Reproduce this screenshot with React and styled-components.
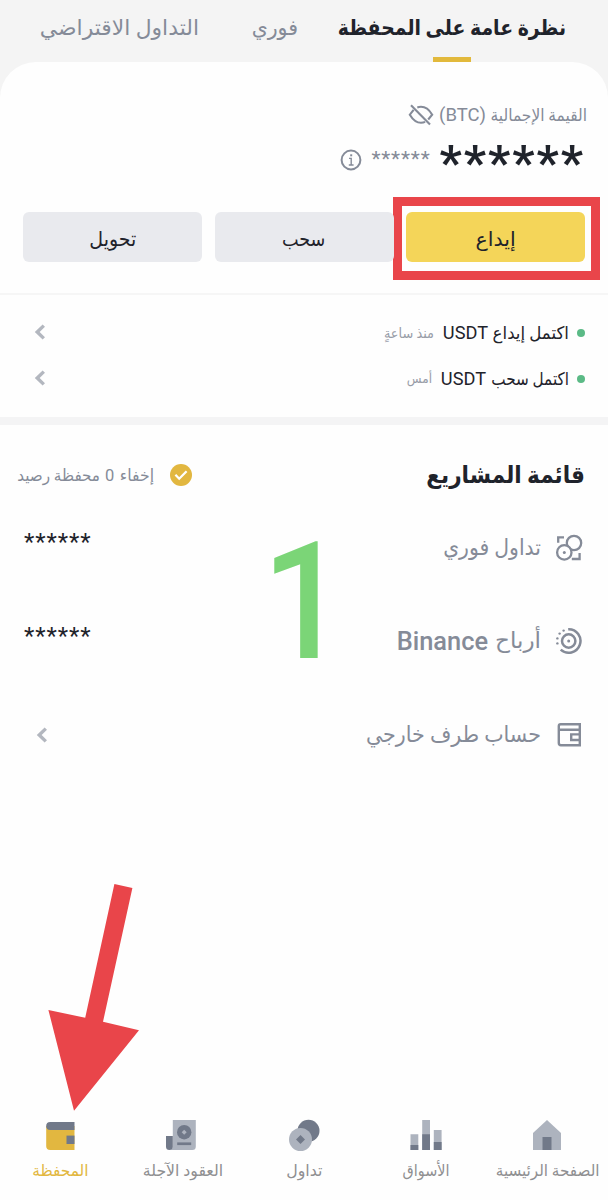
import React from 'react';
import styled, { createGlobalStyle, css } from 'styled-components';

const GlobalStyle = createGlobalStyle`
  * {
    box-sizing: border-box;
  }

  body {
    margin: 0;
    background: #f4f4f4;
    font-family: Roboto, "DejaVu Sans", sans-serif;
    color: #1f232b;
  }
`;

const activities = [
  { text: 'اكتمل إيداع', width: 77, scale: 0.95, time: 'منذ ساعةٍ', timeWidth: 50, timeSize: 14, timeScale: 0.92 },
  { text: 'اكتمل سحب', width: 79, scale: 0.87, time: 'أمس', timeWidth: 25, timeSize: 13, timeScale: 0.93 },
];

const tabs = [
  { id: 'home', label: 'الصفحة الرئيسية', scale: 0.95, Icon: HomeIcon },
  { id: 'markets', label: 'الأسواق', scale: 0.9, Icon: MarketsIcon },
  { id: 'trade', label: 'تداول', scale: 0.99, Icon: TradeIcon },
  { id: 'futures', label: 'العقود الآجلة', scale: 0.98, Icon: FuturesIcon },
  { id: 'wallet', label: 'المحفظة', scale: 0.96, Icon: WalletIcon, active: true },
];

function EyeOffIcon() {
  return (
    <svg width="26" height="22" viewBox="0 0 26 22" fill="none" stroke="#858b98" strokeWidth="2.1">
      <path d="M3 1.200 22 20.400" />
      <path d="M5.600 5.800 1.800 10.700c3 4.900 6.600 8.100 11.200 8.100 1.500 0 2.900-.3 4.100-.9" />
      <path d="M9.300 3.400c1.100-.4 2.400-.6 3.700-.6 4.700 0 8.300 3 11.200 7.900l-4 4.800" />
    </svg>
  );
}

function InfoIcon() {
  return (
    <svg width="22" height="22" viewBox="0 0 22 22" fill="none" stroke="#858b98" strokeWidth="2">
      <circle cx="11" cy="11" r="9.400" />
      <path d="M9 9.400h2.200v6.800M8.800 16h4.800" strokeWidth="1.400" />
      <path d="M10.200 6.300h2" />
    </svg>
  );
}

function Chevron() {
  return (
    <svg width="12" height="16" viewBox="0 0 12 16" fill="none" stroke="#b3b7bf" strokeWidth="3.400">
      <path d="M9.800 1.600 3.200 8l6.600 6.400" />
    </svg>
  );
}

function CheckIcon() {
  return (
    <svg width="22" height="22" viewBox="0 0 22 22">
      <circle cx="11" cy="11" r="11" fill="#e2b740" />
      <path d="m5.400 10.800 3.800 3.900 7.400-7.500" fill="none" stroke="#fff" strokeWidth="2.300" />
    </svg>
  );
}

function SpotIcon() {
  return (
    <svg width="28" height="28" viewBox="0 0 28 28" fill="none" stroke="#858b98" strokeWidth="2.300">
      <path d="M3.200 8.800V3.400H9M16.800 25H24.600v-6" />
      <circle cx="19" cy="9" r="7.200" />
      <circle cx="9.300" cy="18.400" r="7.200" fill="#fff" />
      <circle cx="9.300" cy="18.400" r="1.500" fill="#858b98" stroke="none" />
    </svg>
  );
}

function EarnIcon() {
  return (
    <svg width="28" height="28" viewBox="0 0 28 28" fill="none" stroke="#858b98" strokeWidth="2.500">
      <circle cx="13.700" cy="14" r="6.700" />
      <circle cx="13.700" cy="14" r="1.500" fill="#858b98" stroke="none" />
      <path d="M13.200 2.200A11.800 11.800 0 1 1 5.700 22.700" />
      <g fill="#858b98" stroke="none">
        <circle cx="8.600" cy="3.600" r="1.200" />
        <circle cx="4.600" cy="6.600" r="1.200" />
        <circle cx="2.400" cy="11.400" r="1.200" />
        <circle cx="2.400" cy="16.400" r="1.200" />
      </g>
    </svg>
  );
}

function AccountIcon() {
  return (
    <svg width="28" height="28" viewBox="0 0 28 28" fill="none" stroke="#858b98" strokeWidth="2.400">
      <path d="M24.800 3.200H5.600Q3.800 3.200 3.800 5v17q0 2.200 2.200 2.200h18.800z" />
      <path d="M4 8.800h20.800M24.800 13.400h-8.600v5.600h8.600" />
    </svg>
  );
}

function HomeIcon() {
  return (
    <svg width="32" height="32" viewBox="0 0 32 32">
      <path d="M2 14 16 1l14 13v17H2z" fill="#adb3be" />
      <path d="M11.500 18h9v13h-9z" fill="#717989" />
    </svg>
  );
}

function MarketsIcon() {
  return (
    <svg width="32" height="32" viewBox="0 0 32 32">
      <path d="M0.500 15.300h7.800V31H.5zM12.200 1H20v30h-7.800zM23.800 11h7.800v20h-7.800z" fill="#adb3be" />
      <path d="M0.500 26h7.800v5H.5zM12.200 15.300H20V31h-7.800zM23.800 23h7.800v8h-7.800z" fill="#717989" />
    </svg>
  );
}

function TradeIcon() {
  return (
    <svg width="32" height="32" viewBox="0 0 32 32">
      <circle cx="20.500" cy="11.800" r="11" fill="#717989" />
      <circle cx="12.500" cy="20.500" r="11.500" fill="#adb3be" />
      <path d="m12.500 16 4.500 4.500-4.500 4.500L8 20.500z" fill="#717989" />
    </svg>
  );
}

function FuturesIcon() {
  return (
    <svg width="32" height="32" viewBox="0 0 32 32">
      <path d="M6.800 1h23v26.500q0 3.500-3.500 3.500h-23q3.500 0 3.500-4z" fill="#adb3be" />
      <path d="M0 17h6.800v10.500Q6.800 31 3.400 31T0 27.500z" fill="#717989" />
      <circle cx="18.200" cy="13.200" r="7.200" fill="#717989" />
      <path d="m18.200 10.700 2.500 2.500-2.500 2.500-2.500-2.500z" fill="#adb3be" />
      <path d="M11.200 23.400h14v2.700h-14z" fill="#717989" />
    </svg>
  );
}

function WalletIcon() {
  return (
    <svg width="32" height="32" viewBox="0 0 32 32">
      <path d="M1.200 7h28.300v24H5.200q-4 0-4-4z" fill="#e2b740" />
      <path d="M5.200 3h24.300v8H5.200q-4 0-4-4t4-4z" fill="#717989" />
      <path d="M21.500 16.600h8v8.400h-8z" fill="#717989" />
    </svg>
  );
}

export default function App() {
  return (
    <Screen dir="rtl">
      <GlobalStyle />
      <Header>
        <HeaderTab $active $gap={40}>
          <Words $w={228} $scale={0.873}>نظرة عامة على المحفظة</Words>
        </HeaderTab>
        <HeaderTab $gap={53}>
          <Words $w={46} $scale={0.95}>فوري</Words>
        </HeaderTab>
        <HeaderTab>
          <Words $w={159} $scale={1.012}>التداول الاقتراضي</Words>
        </HeaderTab>
      </Header>

      <Card>
        <Summary>
          <TotalLabel>
            <Words $w={98} $scale={0.92}>القيمة الإجمالية</Words>
            <Currency>(BTC)</Currency>
            <EyeOffIcon />
          </TotalLabel>
          <Balance>
            <BigStars>******</BigStars>
            <SmallStars>******</SmallStars>
            <InfoIcon />
          </Balance>
          <Actions>
            <Action $primary>
              <Label $scale={1.03}>إيداع</Label>
              <Highlight />
            </Action>
            <Action><Label $scale={0.88}>سحب</Label></Action>
            <Action><Label $scale={0.95}>تحويل</Label></Action>
          </Actions>
        </Summary>

        <Activities>
          {activities.map((item) => (
            <Activity key={item.text}>
              <Dot />
              <Words $w={item.width} $scale={item.scale}>{item.text}</Words>
              <Coin>USDT</Coin>
              <Time $size={item.timeSize}>
                <Words $w={item.timeWidth} $scale={item.timeScale}>{item.time}</Words>
              </Time>
              <Chevron />
            </Activity>
          ))}
        </Activities>

        <ListHeader>
          <Title><Words $w={158} $scale={0.9}>قائمة المشاريع</Words></Title>
          <CheckIcon />
          <HideText>
            <Words $w={35} $scale={0.95}>إخفاء</Words>
            <span>0</span>
            <Words $w={84} $scale={0.92}>محفظة رصيد</Words>
          </HideText>
        </ListHeader>

        <Project>
          <SpotIcon />
          <Words $w={98} $scale={0.927}>تداول فوري</Words>
          <Amount>******</Amount>
        </Project>
        <Project>
          <EarnIcon />
          <Words $w={47} $scale={1.05}>أرباح</Words>
          <Brand>Binance</Brand>
          <Amount>******</Amount>
        </Project>
        <Project>
          <AccountIcon />
          <Words $w={175} $scale={0.937}>حساب طرف خارجي</Words>
          <More><Chevron /></More>
        </Project>

        <BottomNav>
          {tabs.map(({ id, label, scale, Icon, active }) => (
            <NavItem key={id} $active={active}>
              <Icon />
              <Label $scale={scale}>{label}</Label>
            </NavItem>
          ))}
        </BottomNav>
      </Card>

      <StepNumber>1</StepNumber>
      <Arrow width="92" height="228" viewBox="0 0 92 228">
        <path d="M66.400 0 84.400 4 55 137.800l36 8.500-65 80.500L.4 126l36.800 7.700z" fill="#e9454a" />
      </Arrow>
    </Screen>
  );
}

const Screen = styled.div`
  position: relative;
  display: flex;
  flex-direction: column;
  width: 608px;
  height: 1200px;
  overflow: hidden;
  background: #f4f4f4;

  svg {
    flex: none;
    display: block;
  }
`;

// narrows the glyphs while keeping the drawn width in the flow
const Words = styled.span`
  display: inline-block;
  flex: none;
  width: ${({ $w }) => $w}px;
  white-space: nowrap;
  transform: scaleX(${({ $scale = 1 }) => $scale});
  transform-origin: right center;
`;

const Label = styled.span`
  white-space: nowrap;
  transform: scaleX(${({ $scale = 1 }) => $scale});
`;

const Header = styled.div`
  display: flex;
  height: 62px;
  padding-right: 42px;
  flex: none;
`;

const HeaderTab = styled.div`
  position: relative;
  height: 62px;
  padding-top: 12px;
  margin-left: ${({ $gap = 0 }) => $gap}px;
  font-size: 21.6px;
  line-height: 32px;
  color: #858b98;

  ${({ $active }) => $active && css`
    font-weight: 700;
    color: #1f232b;

    &::after {
      content: '';
      position: absolute;
      bottom: 0;
      left: 95px;
      width: 38px;
      height: 5px;
      background: #e2b93c;
    }
  `}
`;

const Card = styled.div`
  flex: 1;
  display: flex;
  flex-direction: column;
  background: #fefefe;
  border-radius: 36px 36px 0 0;
`;

const Summary = styled.div`
  display: flex;
  flex-direction: column;
  height: 233px;
  padding-top: 42px;
  border-bottom: 2px solid #f6f6f6;
`;

const TotalLabel = styled.div`
  display: flex;
  align-items: center;
  height: 22px;
  padding-right: 21px;
  font-size: 16.8px;
  line-height: 22px;
  color: #858b98;
`;

const Currency = styled.span`
  margin: 0 3px 0 5px;
  font-size: 18.5px;
`;

const Balance = styled.div`
  display: flex;
  height: 50px;
  margin-top: 11px;
  padding-right: 23px;

  svg {
    margin: 12px 9px 0 0;
  }
`;

const BigStars = styled.span`
  font-size: 49px;
  font-weight: 700;
  line-height: 52px;
  letter-spacing: 2px;
`;

const SmallStars = styled.span`
  margin: 12px 9px 0 0;
  font-size: 21px;
  line-height: 21px;
  letter-spacing: 0.8px;
  color: #858b98;
`;

const Actions = styled.div`
  display: grid;
  grid-template-columns: repeat(3, 1fr);
  gap: 12.5px;
  margin-top: 25px;
  padding: 0 23px;
`;

const Action = styled.button`
  position: relative;
  height: 50px;
  padding: 3px 0 0;
  display: flex;
  align-items: center;
  justify-content: center;
  border: 0;
  border-radius: 6px;
  background: ${({ $primary }) => ($primary ? '#f4d559' : '#e9eaee')};
  color: #1f232b;
  font: 20px/30px Roboto, "DejaVu Sans", sans-serif;
`;

const Highlight = styled.span`
  position: absolute;
  inset: -15px -15px -18px -13px;
  border: 9px solid #e9454a;
`;

const Activities = styled.div`
  padding: 15px 0;
  border-bottom: 8px solid #f4f4f5;
`;

const Activity = styled.div`
  display: flex;
  align-items: center;
  height: 46px;
  padding: 0 23px 0 34px;
  font-size: 17.5px;
  line-height: 24px;

  svg {
    margin-right: auto;
    margin-bottom: 2px;
  }
`;

const Dot = styled.i`
  width: 8px;
  height: 8px;
  margin-left: 8px;
  border-radius: 50%;
  background: #5bba86;
`;

const Coin = styled.span`
  margin: 0 4px 0 9px;
  font-size: 18.2px;
`;

const Time = styled.span`
  font-size: ${({ $size }) => $size}px;
  color: #979ca7;
`;

const ListHeader = styled.div`
  display: flex;
  align-items: center;
  height: 51px;
  margin-top: 25px;
  padding: 0 23px 2px 16px;

  svg {
    margin-right: auto;
    margin-left: 16px;
  }
`;

const Title = styled.h2`
  margin: 0;
  font-size: 24px;
  line-height: 32px;
`;

const HideText = styled.div`
  display: flex;
  gap: 5px;
  padding-top: 2px;
  font-size: 16.5px;
  line-height: 24px;
  color: #858b98;
`;

const Project = styled.div`
  display: flex;
  align-items: center;
  height: 93.5px;
  padding: 0 25px 0 24px;
  font-size: 22px;
  line-height: 34px;
  color: #858b98;

  > svg {
    margin-left: 14px;
  }
`;

const Brand = styled.span`
  margin-right: 6px;
  font-size: 25.4px;
  font-weight: 500;
`;

const Amount = styled.span`
  margin-right: auto;
  padding-bottom: 11px;
  font-size: 24px;
  letter-spacing: 0.9px;
  color: #1f232b;
`;

const More = styled.span`
  margin-right: auto;
  margin-left: 12px;
`;

const BottomNav = styled.nav`
  display: grid;
  grid-template-columns: repeat(5, 1fr);
  height: 81px;
  margin-top: auto;
`;

const NavItem = styled.div`
  display: flex;
  flex-direction: column;
  align-items: center;
  gap: 8.5px;
  font-size: 16px;
  line-height: 22px;
  color: ${({ $active }) => ($active ? '#e2b740' : '#8f8f91')};
`;

const StepNumber = styled.div`
  position: absolute;
  left: 262px;
  top: 521px;
  font-size: 163px;
  line-height: 163px;
  font-weight: 500;
  color: #7bd577;
  transform: scaleX(0.91);
  transform-origin: left center;
`;

const Arrow = styled.svg`
  position: absolute;
  left: 47.6px;
  top: 884px;
`;
